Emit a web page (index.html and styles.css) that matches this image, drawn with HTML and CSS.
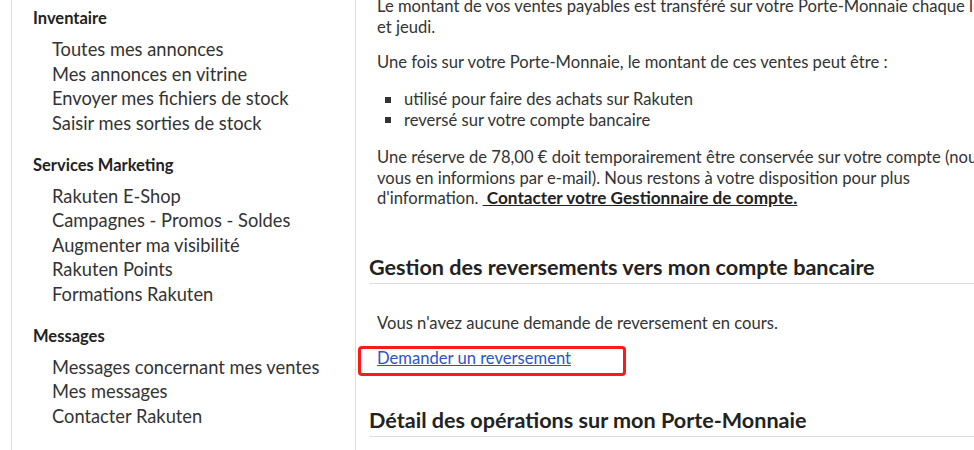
FILE: index.html
```html
<!DOCTYPE html>
<html lang="fr">
<head>
  <meta charset="UTF-8" />
  <title>Mon Porte-Monnaie</title>
  <meta name="viewport" content="width=device-width, initial-scale=1.0" />
  <link rel="stylesheet" href="styles.css">
</head>
<body>

<div class="page">
  <!-- Menu vendeur -->
  <aside class="sidebar">
    <div class="menu-group">
      <h3>Inventaire</h3>
      <ul>
        <li><a href="#">Toutes mes annonces</a></li>
        <li><a href="#">Mes annonces en vitrine</a></li>
        <li><a href="#">Envoyer mes fichiers de stock</a></li>
        <li><a href="#">Saisir mes sorties de stock</a></li>
      </ul>
    </div>
    <div class="menu-group">
      <h3>Services Marketing</h3>
      <ul>
        <li><a href="#">Rakuten E-Shop</a></li>
        <li><a href="#">Campagnes - Promos - Soldes</a></li>
        <li><a href="#">Augmenter ma visibilité</a></li>
        <li><a href="#">Rakuten Points</a></li>
        <li><a href="#">Formations Rakuten</a></li>
      </ul>
    </div>
    <div class="menu-group">
      <h3>Messages</h3>
      <ul>
        <li><a href="#">Messages concernant mes ventes</a></li>
        <li><a href="#">Mes messages</a></li>
        <li><a href="#">Contacter Rakuten</a></li>
      </ul>
    </div>
  </aside>

  <!-- Porte-Monnaie -->
  <main class="content">
    <p class="intro">Le montant de vos ventes payables est transféré sur votre Porte-Monnaie chaque lundi<br>et jeudi.</p>
    <p>Une fois sur votre Porte-Monnaie, le montant de ces ventes peut être :</p>
    <ul class="bullets">
      <li>utilisé pour faire des achats sur Rakuten</li>
      <li>reversé sur votre compte bancaire</li>
    </ul>
    <p>Une réserve de 78,00 € doit temporairement être conservée sur votre compte (nous<br>vous en informions par e-mail). Nous restons à votre disposition pour plus<br>d'information. <a class="strong-link" href="#">&nbsp;Contacter votre Gestionnaire de compte.</a></p>

    <h2>Gestion des reversements vers mon compte bancaire</h2>
    <p class="empty">Vous n'avez aucune demande de reversement en cours.</p>
    <div class="highlight">
      <a class="blue-link" href="#">Demander un reversement</a>
    </div>

    <h2 class="last">Détail des opérations sur mon Porte-Monnaie</h2>
  </main>
</div>

</body>
</html>
```

FILE: styles.css
```css
body {
  background: white;
  font-family: Lato, "Liberation Sans", sans-serif;
  color: #333;
  margin: 0;
  overflow: hidden;
}

.page {
  display: flex;
  align-items: flex-start;
  height: 450px;
  overflow: hidden;
}

/* menu de gauche */
.sidebar {
  flex: 0 0 auto;
  width: 322px;
  height: 100%;
  margin-left: 11px;
  padding: 8px 0 0 21px;
  border-left: 1px solid #ddd;
  border-right: 1px solid #ddd;
}

.menu-group {
  margin-bottom: 19.5px;
}

.menu-group h3 {
  font-size: 16.5px;
  line-height: 20px;
  font-weight: bold;
  color: #222;
  margin: 0 0 9px;
}

.menu-group ul {
  list-style: none;
  margin: 0;
  padding: 0 0 0 19px;
}

.menu-group li {
  font-size: 18.3px;
  line-height: 24.5px;
}

.menu-group a {
  color: #333;
  text-decoration: none;
}

/* contenu */
.content {
  flex: 1;
  min-width: 0;
  margin-top: -4px;
  padding-left: 13px;
  font-size: 16.6px;
  line-height: 20.5px;
}

.content p {
  margin: 0 0 15px;
  padding-left: 8px;
  white-space: nowrap;
}

.bullets {
  list-style: none;
  margin: 16.5px 0 17px;
  padding-left: 8px;
}

.bullets li::before {
  content: "";
  display: inline-block;
  width: 6px;
  height: 6px;
  background: #333;
  margin: 0 13px 2px 8px;
  vertical-align: middle;
}

.strong-link {
  color: #222;
  font-size: 17.2px;
  font-weight: bold;
  text-decoration: underline;
}

h2 {
  font-size: 21.6px;
  line-height: 26px;
  font-weight: bold;
  color: #222;
  margin: 45.5px 0 0;
  padding-bottom: 3px;
  border-bottom: 1px solid #ddd;
}

.content p.empty {
  margin: 28.75px 0 12.75px;
}

.highlight {
  width: 246px;
  margin-left: -11px;
  padding: 0 0 6px 16px;
  border: 3px solid #ff1a1a;
  border-radius: 4px;
}

.blue-link {
  display: block;
  line-height: 18px;
  color: #2b55c5;
  text-decoration: underline;
}

h2.last {
  margin-top: 31px;
}
```
